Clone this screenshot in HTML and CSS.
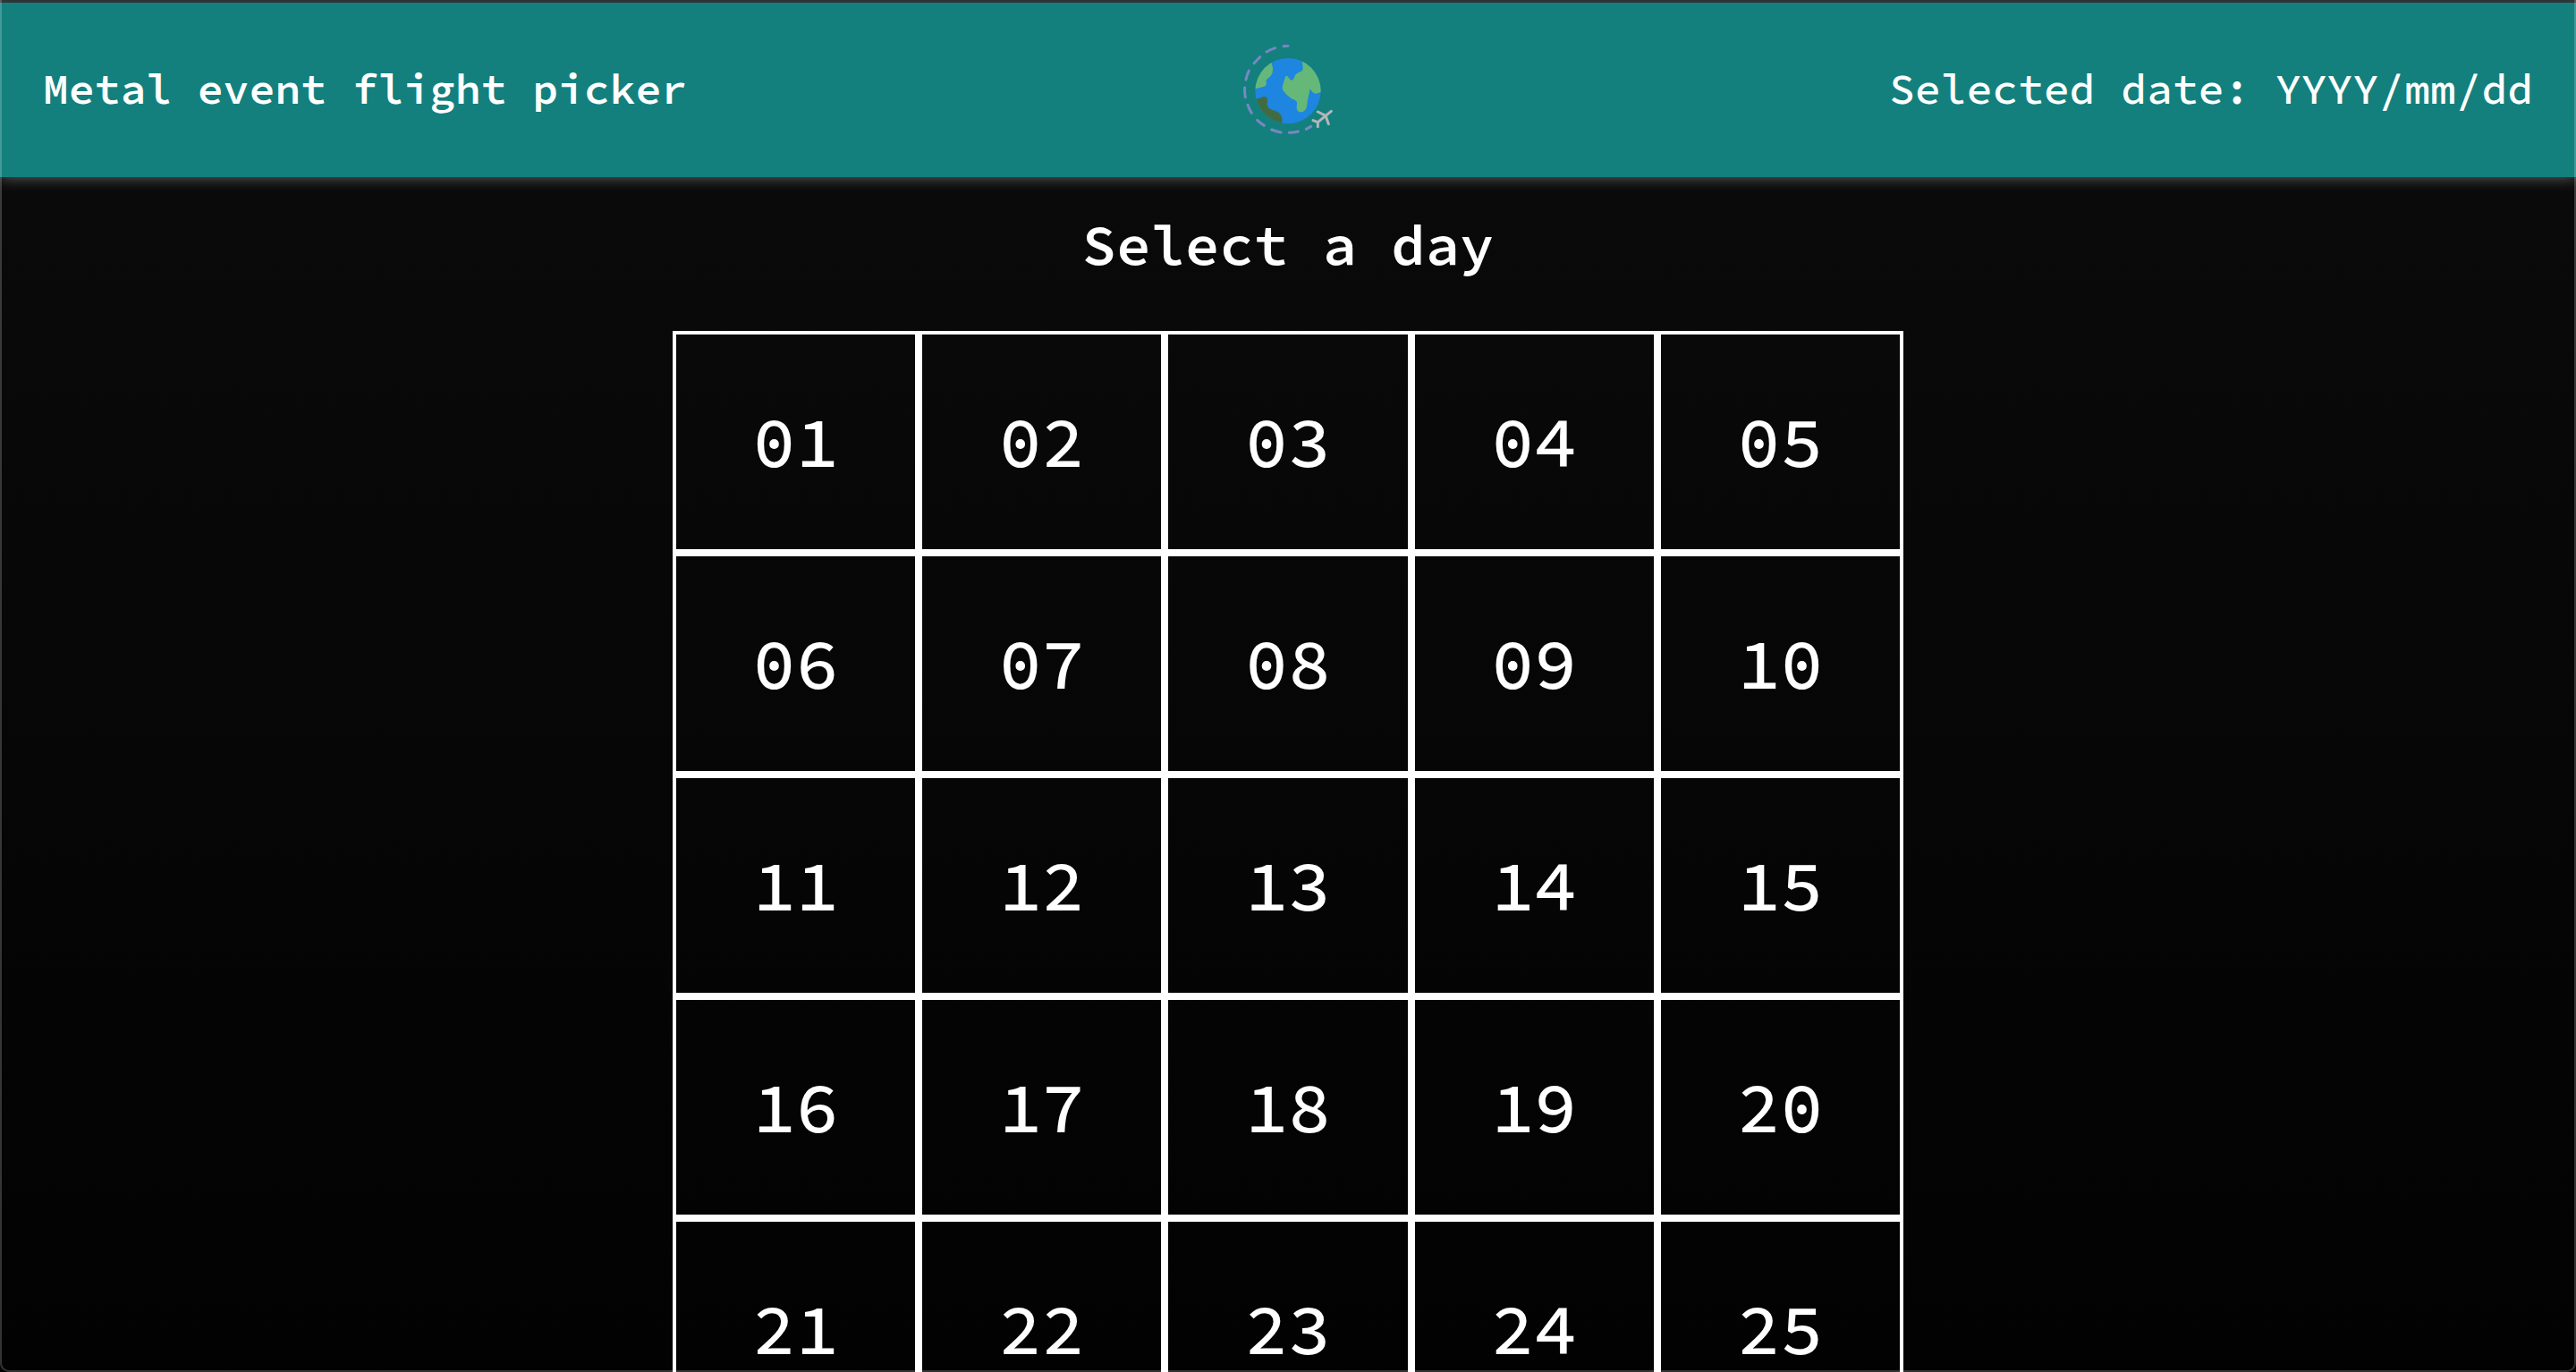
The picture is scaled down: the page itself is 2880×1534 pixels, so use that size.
FILE: index.html
```html
<!DOCTYPE html>
<html lang="en">
<head>
<meta charset="utf-8">
<meta name="viewport" content="width=device-width, initial-scale=1">
<title>Metal event flight picker</title>
<link rel="stylesheet" href="styles.css">
</head>
<body>
<header class="topbar">
  <h1 class="brand">Metal event flight picker</h1>
  <svg class="logo" viewBox="60 60 300 300" aria-hidden="true">
    <defs><clipPath id="globe"><circle cx="210" cy="215" r="110"/></clipPath></defs>
    <circle cx="210" cy="215" r="110" fill="#1e85e0"/>
    <g clip-path="url(#globe)">
      <path fill="#66b878" d="M90 210 Q120 204 134 199 Q140 190 136 180 Q140 174 151 166 Q161 154 159 138 L154 118 L90 100Z"/>
      <path fill="#66b878" d="M256 100 L260 137 Q262 146 251 151 Q236 156 232 167 Q228 180 220 179 Q216 177 210 168 Q205 161 201 168 L192 197 Q189 208 195 215 Q204 229 226 243 Q238 246 240 254 L239 272 Q241 287 257 286 Q269 283 273 268 L276 245 L284 208 Q293 225 304 224 Q315 222 330 214 L330 100Z"/>
      <path fill="#416c42" d="M95 246 L129 234 Q141 234 141 247 L140 262 Q143 275 158 279 Q180 283 187 298 Q193 308 189 330 L95 330Z"/>
    </g>
    <g fill="none" stroke="#7987c2" stroke-width="9" stroke-linecap="round">
      <path d="M195 65 L210 64 M138 84 Q152 76 167 71 M96 122 L116 101 M69 177 Q72 162 79 147 M65 204 Q64 221 67 236 M75 262 Q80 277 88 289 M107 313 Q118 324 130 331 M155 345 Q170 351 186 354 M214 355 Q229 355 244 351 M271 343 L287 334"/>
    </g>
    <g fill="none" stroke="#b3b6ba" stroke-width="9" stroke-linecap="round" stroke-linejoin="round">
      <path d="M355 283 L310 320 M310 285 L336 298 L346 326 M294 314 L310 320 L310 335"/>
    </g>
  </svg>
  <p class="selected">Selected date: YYYY/mm/dd</p>
</header>
<main class="picker">
  <h2 class="heading">Select a day</h2>
  <div class="days">
    <button class="day" type="button">01</button>
    <button class="day" type="button">02</button>
    <button class="day" type="button">03</button>
    <button class="day" type="button">04</button>
    <button class="day" type="button">05</button>
    <button class="day" type="button">06</button>
    <button class="day" type="button">07</button>
    <button class="day" type="button">08</button>
    <button class="day" type="button">09</button>
    <button class="day" type="button">10</button>
    <button class="day" type="button">11</button>
    <button class="day" type="button">12</button>
    <button class="day" type="button">13</button>
    <button class="day" type="button">14</button>
    <button class="day" type="button">15</button>
    <button class="day" type="button">16</button>
    <button class="day" type="button">17</button>
    <button class="day" type="button">18</button>
    <button class="day" type="button">19</button>
    <button class="day" type="button">20</button>
    <button class="day" type="button">21</button>
    <button class="day" type="button">22</button>
    <button class="day" type="button">23</button>
    <button class="day" type="button">24</button>
    <button class="day" type="button">25</button>
  </div>
</main>
<div class="frame"></div>
</body>
</html>
```
FILE: styles.css
```css
* {
  box-sizing: border-box;
}

html {
  background: #000;
  scrollbar-width: none;
}

body {
  margin: 0;
  min-height: 100vh;
  background: linear-gradient(#0b0b0b, #020202) fixed;
  color: #fff;
  font-family: "Source Code Pro", "Liberation Mono", monospace;
}

.topbar {
  display: grid;
  grid-template-columns: 1fr auto 1fr;
  align-items: center;
  padding: 47px 48px 48px;
  border-top: 3px solid #2e3438;
  background: #13807e;
  box-shadow: 0 0 16px rgba(255, 255, 255, 0.4);
}

.brand,
.selected {
  margin: 0;
  padding-bottom: 2px;
  font-size: 48px;
  line-height: 64px;
}

.brand {
  font-weight: 600;
}

.selected {
  font-weight: 500;
  text-align: right;
}

.logo {
  display: block;
  width: 100px;
  height: 100px;
}

.picker {
  padding: 35px 48px 64px;
}

.heading {
  margin: 0 0 57px;
  font-size: 64px;
  line-height: 80px;
  font-weight: 600;
  text-align: center;
}

.days {
  display: grid;
  grid-template-columns: repeat(5, 1fr);
  max-width: 1376px;
  margin: 0 auto;
}

.day {
  margin: 0;
  padding: 72px 0;
  border: 4px solid #fff;
  border-radius: 0;
  background: transparent;
  color: inherit;
  font: inherit;
  font-size: 80px;
  font-weight: 500;
  line-height: 96px;
  cursor: pointer;
}

/* thin window outline over the page edges */
.frame {
  position: fixed;
  inset: 0;
  border: 2px solid rgba(255, 255, 255, 0.2);
  border-top: 0;
  border-radius: 0 0 10px 10px;
  pointer-events: none;
}
```
